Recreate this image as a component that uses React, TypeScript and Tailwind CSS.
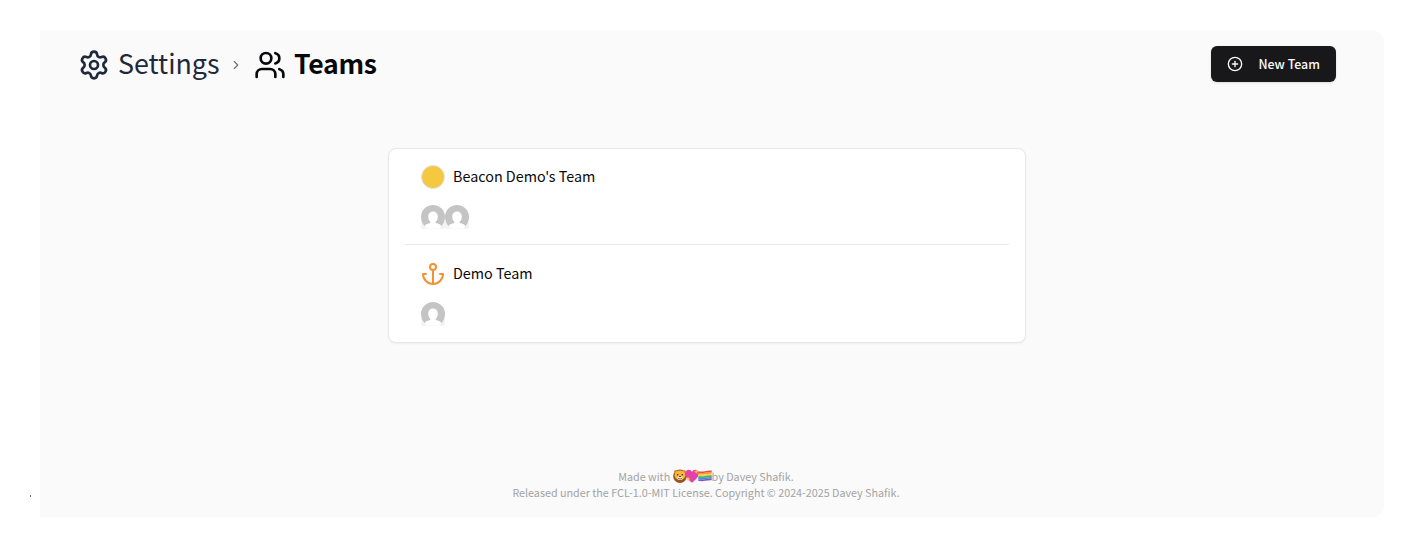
import React from "react";
import { Settings, Users, ChevronRight, CirclePlus } from "lucide-react";

function AnchorIcon() {
  return (
    <svg viewBox="0 0 24 24" className="size-6 text-[#f09235]" fill="none" stroke="currentColor" strokeWidth="2" strokeLinecap="round" strokeLinejoin="round" aria-hidden="true">
      <circle cx="12" cy="5" r="3" />
      <path d="M12 22V8" />
      <path d="M5 12H2a10 10 0 0 0 20 0h-3" />
    </svg>
  );
}

function Avatar() {
  return (
    <svg viewBox="0 0 24 24" className="size-6" aria-hidden="true">
      <path d="M0 17h24v6q-1 1-3 1H3q-2 0-3-1Z" fill="#f3f3f3" />
      <path d="M0 12a12 12 0 0 1 24 0c0 4-1.600 7.200-4 9.500H4C1.600 19.200 0 16 0 12Z" fill="#c4c4c4" />
      <path d="M12 6.500c2.800 0 4.800 2.200 4.800 5.200 0 2.300-.9 4-2.100 5.100v1.200c2.700.4 4.500 1.200 5.600 3L18.500 23.500h-13L3.700 21c1.100-1.800 2.900-2.600 5.600-3v-1.200c-1.200-1.100-2.100-2.800-2.100-5.100 0-3 2-5.200 4.800-5.200Z" fill="#fff" />
    </svg>
  );
}

function Lion() {
  return (
    <svg viewBox="0 0 14 14" className="size-3.5" aria-hidden="true">
      <circle cx="7" cy="7.200" r="6.800" fill="#99531f" />
      <circle cx="2.700" cy="2.700" r="1.700" fill="#d98a2b" />
      <circle cx="11.300" cy="2.700" r="1.700" fill="#d98a2b" />
      <ellipse cx="7" cy="6.200" rx="5.400" ry="4.800" fill="#f6b73d" />
      <circle cx="4.700" cy="5.800" r=".8" fill="#43270f" />
      <circle cx="9.300" cy="5.800" r=".8" fill="#43270f" />
      <ellipse cx="7" cy="9" rx="2.700" ry="1.900" fill="#fff0cf" />
      <path d="M5.700 7h2.600L7 8.600Z" fill="#43270f" />
      <path d="M5 9.300q2 1.500 4 0" fill="none" stroke="#6b3a17" strokeWidth=".7" />
    </svg>
  );
}

function Heart() {
  return (
    <svg viewBox="0 0 14 14" className="size-3.5" aria-hidden="true">
      <path d="M7 13.800C3.500 11 .2 8.100.2 4.600.2 2.300 1.900.8 3.800.8 5.200.8 6.300 1.600 7 2.800 7.700 1.600 8.800.8 10.200.8c1.900 0 3.600 1.500 3.600 3.800 0 3.500-3.300 6.400-6.800 9.200Z" fill="#e63fae" />
      <path d="m11.300.5.6 1.700 1.700.6-1.700.6-.6 1.700-.6-1.700L9 2.800l1.700-.6ZM3 7.500l.7 1.800 1.800.7-1.800.7L3 12.500l-.7-1.800L.5 10l1.800-.7Z" fill="#fbd43b" />
    </svg>
  );
}

const stripes = ["#e94b4b", "#f59436", "#f6d743", "#4fb562", "#3993e5", "#8a51bb"];

function RainbowFlag() {
  return (
    <svg viewBox="0 0 14 14" className="size-3.5" aria-hidden="true">
      {stripes.map((color, i) => (
        <path key={color} d={`M.3 ${3 + i * 1.6}q3.400 .8 6.700 0t6.700-.6`} fill="none" stroke={color} strokeWidth="1.700" />
      ))}
    </svg>
  );
}

function TeamRow({ icon, name, members }: { icon: React.ReactNode; name: string; members: number }) {
  return (
    <div className="flex h-24 flex-col px-4 pt-4">
      <div className="flex h-6 items-center gap-2">
        {icon}
        <span className="pb-0.5 text-[14.35px] leading-6 whitespace-nowrap">{name}</span>
      </div>
      <div className="mt-4 flex">
        {Array.from({ length: members }, (_, i) => (
          <Avatar key={i} />
        ))}
      </div>
    </div>
  );
}

export default function App() {
  return (
    <div className="flex h-[559px] bg-white pt-[30px] font-['Noto_Sans_CJK_SC',sans-serif] text-[#09090b]">
      <div className="flex w-10 justify-end pt-[465px] pr-[9px]">
        <span className="h-0.5 w-px bg-[#777777]" />
      </div>
      <main className="flex h-[487px] w-[1344px] flex-col rounded-r-xl bg-[#fafafa]">
        <header className="flex h-[52px] items-center justify-between pt-4 pr-12 pl-[38px]">
          <nav className="flex items-center pt-px">
            <Settings className="size-8 text-[#1e293b]" />
            <span className="ml-2 w-[102px] pb-[3px] text-[26.8px] leading-9 text-[#1e293b]">Settings</span>
            <ChevronRight className="ml-[9px] size-3.5 text-[#71717a]" />
            <Users className="ml-[11px] size-8" />
            <h1 className="ml-2 pb-[3px] text-[26.6px] leading-9 font-semibold tracking-[-0.25px]">Teams</h1>
          </nav>
          <button className="flex h-9 w-[125.5px] items-center rounded-md bg-[#18181b] pl-4 text-[12.4px] font-medium text-[#fafafa] shadow">
            <CirclePlus className="mr-4 size-4" />
            <span className="whitespace-nowrap">New Team</span>
          </button>
        </header>
        <section className="mt-[66px] ml-[348px] h-[194.5px] w-[638px] rounded-lg border border-[#e8e8ea] bg-white px-4 shadow-xs">
          <TeamRow name="Beacon Demo's Team" members={2} icon={<span className="size-6 rounded-full border border-[#e4e4e7] bg-[#f5c842]" />} />
          <hr className="-mt-px border-[#e8e8ea]" />
          <div className="pt-px">
            <TeamRow name="Demo Team" members={1} icon={<AnchorIcon />} />
          </div>
        </section>
        <footer className="mt-auto mb-4 flex w-[1332px] flex-col items-center text-[10.76px] leading-4 text-[#a3a3a3]">
          <div className="flex h-4 items-center whitespace-pre">
            <span>Made with </span>
            <span className="mb-0.5 flex -space-x-[1.500px]">
              <Lion />
              <Heart />
              <RainbowFlag />
            </span>
            <span>by Davey Shafik.</span>
          </div>
          <p>Released under the FCL-1.0-MIT License. Copyright © 2024-2025 Davey Shafik.</p>
        </footer>
      </main>
    </div>
  );
}
